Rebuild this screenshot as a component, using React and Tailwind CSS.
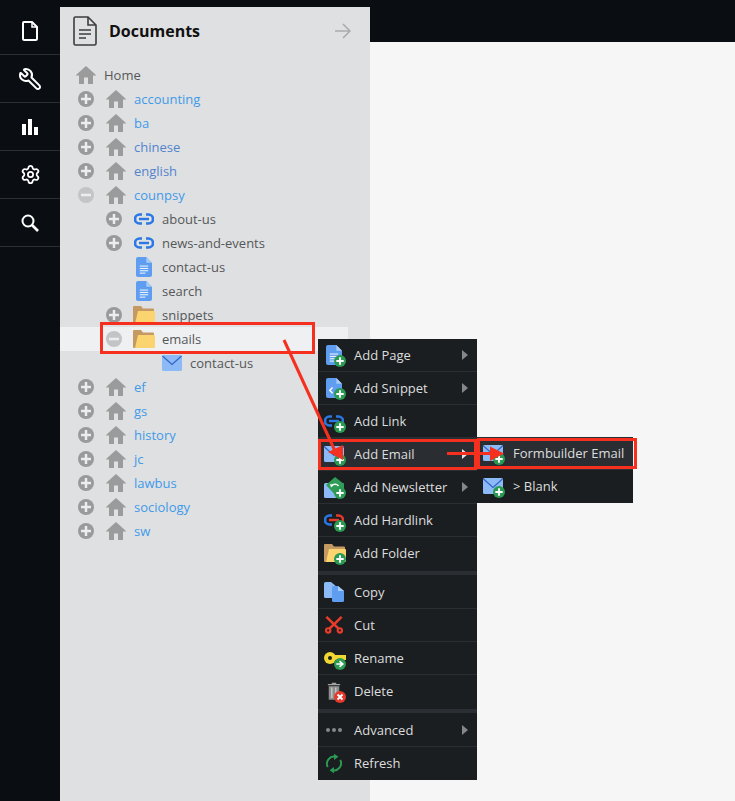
import { Settings, Wrench } from 'lucide-react';

const depthPad = { 0: 'pl-[18px]', 1: 'pl-[46px]', 2: 'pl-[74px]' };

function House() {
  return (
    <svg width="20" height="18" viewBox="0 0 20 18" className="shrink-0">
      <path d="M10 0 L20 9 V9.5 H17 V18 H12 V11.5 H8 V18 H3 V9.5 H0 V9 Z" fill="#9b9b9b" />
    </svg>
  );
}

function Toggle({ open }) {
  return (
    <svg width="16" height="16" viewBox="0 0 16 16" className="shrink-0">
      <circle cx="8" cy="8" r="8" fill={open ? '#c3c4c6' : '#999a9c'} />
      <rect x="3" y="6.75" width="10" height="2.5" fill="#eceded" />
      {!open && <rect x="6.75" y="3" width="2.5" height="10" fill="#eceded" />}
    </svg>
  );
}

function LinkIcon({ accent = '#2a78e4' }) {
  return (
    <svg width="20" height="12" viewBox="0 0 20 12" className="shrink-0">
      <path d="M8 1.5 H5.5 a4.5 4.5 0 0 0 0 9 H8" fill="none" stroke="#2a78e4" strokeWidth="2.6" />
      <path d="M12 1.5 H14.5 a4.5 4.5 0 0 1 0 9 H12" fill="none" stroke={accent} strokeWidth="2.6" />
      <rect x="5" y="4.8" width="10" height="2.4" fill={accent} />
    </svg>
  );
}

function PageIcon({ className = '' }) {
  return (
    <svg width="16" height="20" viewBox="0 0 17 21" className={`shrink-0 ${className}`}>
      <path d="M2 0 H11 L17 6 V19 a2 2 0 0 1 -2 2 H2 a2 2 0 0 1 -2 -2 V2 a2 2 0 0 1 2 -2 Z" fill="#5e9df0" />
      <path d="M11 0 L17 6 H11 Z" fill="#a9ccf8" />
      <path d="M4 9.5 H13 M4 12 H13 M4 14.5 H13 M4 17 H10" stroke="#fff" strokeWidth="1" />
    </svg>
  );
}

function SnippetIcon() {
  return (
    <svg width="16" height="20" viewBox="0 0 17 21" className="ml-[2px] shrink-0">
      <path d="M2 0 H11 L17 6 V19 a2 2 0 0 1 -2 2 H2 a2 2 0 0 1 -2 -2 V2 a2 2 0 0 1 2 -2 Z" fill="#5e9df0" />
      <path d="M11 0 L17 6 H11 Z" fill="#a9ccf8" />
      <path d="M7 10 L4 13 L7 16" fill="none" stroke="#fff" strokeWidth="1.5" />
    </svg>
  );
}

function FolderIcon() {
  return (
    <svg width="22" height="18" viewBox="0 0 22 18" className="shrink-0">
      <path d="M1 0 H8 L10 2.5 H20 a1 1 0 0 1 1 1 V17 a1 1 0 0 1 -1 1 H1 a1 1 0 0 1 -1 -1 V1 a1 1 0 0 1 1 -1 Z" fill="#c49a62" />
      <path d="M5 5 H21 a1 1 0 0 1 1 1 V17 a1 1 0 0 1 -1 1 H2 Z" fill="#fbd36f" />
    </svg>
  );
}

function EmailIcon() {
  return (
    <svg width="20" height="16" viewBox="0 0 20 16" className="shrink-0">
      <rect width="20" height="16" rx="1.5" fill="#8cbaf6" />
      <path d="M0.5 1 L10 9.5 L19.5 1" fill="none" stroke="#2e62c4" strokeWidth="1.1" />
    </svg>
  );
}

function NewsletterIcon() {
  return (
    <svg width="20" height="21" viewBox="0 0 20 21" className="shrink-0">
      <rect x="0" y="6" width="20" height="15" rx="1.5" fill="#8cbaf6" />
      <path d="M2 8 L11 0 L20 7 V15 L14 21 Z" fill="#2f9d57" />
      <path d="M7.5 9 a4 3.5 0 0 1 7 0" fill="none" stroke="#fff" strokeWidth="1.4" />
      <path d="M6 7 L9.5 8 L7 10.5 Z" fill="#fff" />
    </svg>
  );
}

function Badge({ color = '#2b9a52', type = 'plus' }) {
  return (
    <svg width="12" height="12" viewBox="0 0 13 13" className="absolute bottom-0 right-[2px]">
      <circle cx="6.5" cy="6.5" r="6.5" fill={color} />
      {type === 'plus' && <path d="M6.5 2.5 V10.5 M2.5 6.5 H10.5" stroke="#fff" strokeWidth="2" />}
      {type === 'go' && <path d="M2.5 6.5 H8 M6 3.5 L9.5 6.5 L6 9.5" fill="none" stroke="#fff" strokeWidth="1.8" />}
      {type === 'x' && <path d="M3.8 3.8 L9.2 9.2 M9.2 3.8 L3.8 9.2" stroke="#fff" strokeWidth="2" />}
    </svg>
  );
}

function MenuIcon({ children, badge = 'plus', color }) {
  return (
    <span className="relative flex h-6 w-6 shrink-0 items-center justify-start">
      {children}
      {badge && <Badge type={badge} color={color} />}
    </span>
  );
}

function CopyIcon() {
  return (
    <svg width="20" height="20" viewBox="0 0 20 20">
      <path d="M1.5 0 H7 L13 5 V16 H1.5 a1.5 1.5 0 0 1 -1.5 -1.5 V1.5 a1.5 1.5 0 0 1 1.5 -1.5 Z" fill="#8cbaf6" />
      <path d="M9.5 4 H14 L20 9 V18.5 a1.5 1.5 0 0 1 -1.5 1.5 H9.5 a1.5 1.5 0 0 1 -1.5 -1.5 V5.5 a1.5 1.5 0 0 1 1.5 -1.5 Z" fill="#5e9df0" />
      <path d="M14 4 L20 9 H14 Z" fill="#a9ccf8" />
    </svg>
  );
}

function CutIcon() {
  return (
    <svg width="18" height="18" viewBox="0 0 20 20" className="ml-px">
      <path d="M18.5 1 L5 14 M1.5 1 L15 14" stroke="#ea3c2b" strokeWidth="2.8" />
      <circle cx="3.5" cy="16" r="2.4" fill="none" stroke="#ea3c2b" strokeWidth="2.4" />
      <circle cx="16.5" cy="16" r="2.4" fill="none" stroke="#ea3c2b" strokeWidth="2.4" />
    </svg>
  );
}

function KeyIcon() {
  return (
    <svg width="22" height="12" viewBox="0 0 22 12">
      <rect x="8" y="3" width="14" height="5" fill="#f2d633" />
      <circle cx="6" cy="6" r="6" fill="#f2d633" />
      <circle cx="6" cy="6" r="2" fill="#1b1e21" />
    </svg>
  );
}

function TrashIcon() {
  return (
    <svg width="14" height="18" viewBox="0 0 16 20" className="ml-[3px]">
      <path d="M1 2 H5.5 V0.5 H10.5 V2 H15 V3.5 H1 Z" fill="#a3a3a3" />
      <path d="M2 4.5 H14 V20 H2 Z" fill="#8e8e8e" />
      <path d="M5.5 6 V18 M10 6 V18" stroke="#c9c9c9" strokeWidth="1.5" />
    </svg>
  );
}

function RefreshIcon() {
  return (
    <svg width="16" height="21" viewBox="0 0 18 22" className="ml-[2px]">
      <path d="M2 15 a8 8 0 0 1 9 -11.5 M16 7 a8 8 0 0 1 -9 11.5" fill="none" stroke="#2b9a52" strokeWidth="2.2" />
      <path d="M9 0 L14 3.5 L9 7 Z M9 15 L4 18.5 L9 22 Z" fill="#2b9a52" />
    </svg>
  );
}

function TreeRow({ depth = 0, toggle, icon, label, tone = 'text-[#555759]', active }) {
  return (
    <div className={`flex h-6 items-center ${depthPad[depth]} ${active ? 'mr-[22px] bg-[#eff0f2]' : ''}`}>
      {toggle ? <Toggle open={toggle === 'open'} /> : <span className="w-4 shrink-0" />}
      <span className="ml-3 flex w-5 shrink-0 justify-center">{icon}</span>
      <span className={`ml-2 pt-[2px] ${tone}`}>{label}</span>
    </div>
  );
}

function Site({ label, tone = 'text-[#3f9ae8]', open }) {
  return <TreeRow toggle={open ? 'open' : 'closed'} icon={<House />} label={label} tone={tone} />;
}

function MenuRow({ icon, label, arrow, active, last }) {
  return (
    <div className={`flex h-[33px] items-center border-b pl-[6px] pr-[9px] ${last ? 'border-transparent' : 'border-[#2b2e32]'} ${active ? 'bg-[#2a2d32]' : ''}`}>
      {icon}
      <span className="ml-1.5 flex-1 whitespace-nowrap pt-[2px] text-[#dcdddd]">{label}</span>
      {arrow && <span className={`h-0 w-0 border-y-[5px] border-l-[6px] border-y-transparent ${active ? 'border-l-[#e6e6e6]' : 'border-l-[#85878a]'}`} />}
    </div>
  );
}

export default function App() {
  return (
    <div className="relative flex h-screen w-screen overflow-hidden bg-[#0a0e13] text-[13px] [font-family:'Open_Sans',sans-serif]">
      <nav className="w-[60px] shrink-0 text-white">
        <div className="flex h-[55px] items-center justify-center border-b border-[#2b2e32] pt-2">
          <svg width="16" height="20" viewBox="0 0 16 20">
            <path d="M2 1 H10 L15 6 V17.5 a1.5 1.5 0 0 1 -1.5 1.5 H2.5 a1.5 1.5 0 0 1 -1.5 -1.5 V2 a1 1 0 0 1 1 -1 Z" fill="none" stroke="#fff" strokeWidth="2" />
            <path d="M10 1 V6 H15" fill="none" stroke="#fff" strokeWidth="1.5" />
          </svg>
        </div>
        <div className="flex h-12 items-center justify-center border-b border-[#2b2e32]">
          <Wrench size={24} strokeWidth={2} className="-scale-x-100" />
        </div>
        <div className="flex h-12 items-center justify-center border-b border-[#2b2e32]">
          <svg width="16" height="16" viewBox="0 0 16 16" fill="#fff">
            <rect y="5" width="4" height="11" />
            <rect x="6" width="4" height="16" />
            <rect x="12" y="8" width="4" height="8" />
          </svg>
        </div>
        <div className="flex h-12 items-center justify-center border-b border-[#2b2e32]">
          <Settings size={21} strokeWidth={2} />
        </div>
        <div className="flex h-12 items-center justify-center border-b border-[#2b2e32]">
          <svg width="18" height="18" viewBox="0 0 18 18">
            <circle cx="7" cy="7" r="5.5" fill="none" stroke="#fff" strokeWidth="2" />
            <path d="M11 11 L17 17" stroke="#fff" strokeWidth="2.6" />
          </svg>
        </div>
      </nav>

      <aside className="mt-[7px] w-[310px] shrink-0 bg-[#dfe0e2]">
        <header className="flex h-12 items-center pl-[13px] pr-[19px]">
          <svg width="24" height="30" viewBox="0 0 24 30" className="shrink-0">
            <path d="M2.5 1 H15 L23 9 V27.5 a1.5 1.5 0 0 1 -1.5 1.5 H2.5 A1.5 1.5 0 0 1 1 27.5 V2.5 A1.5 1.5 0 0 1 2.5 1 Z" fill="none" stroke="#3b3d40" strokeWidth="1.6" />
            <path d="M15 1 V9 H23" fill="none" stroke="#3b3d40" strokeWidth="1.6" />
            <path d="M6 14 H18 M6 18 H18 M6 22 H13" stroke="#3b3d40" strokeWidth="1.6" />
          </svg>
          <h1 className="ml-3 flex-1 text-base font-bold text-[#111]">Documents</h1>
          <svg width="16" height="16" viewBox="0 0 16 16">
            <path d="M0 8 H15 M8 1 L15 8 L8 15" fill="none" stroke="#a9aaac" strokeWidth="1.5" />
          </svg>
        </header>

        <div className="mt-2">
          <div className="flex h-6 items-center pl-4">
            <House />
            <span className="ml-2 pt-[2px] text-[#555759]">Home</span>
          </div>
          <Site label="accounting" />
          <Site label="ba" />
          <Site label="chinese" tone="text-[#5384cc]" />
          <Site label="english" tone="text-[#5384cc]" />
          <Site label="counpsy" open />
          <TreeRow depth={1} toggle="closed" icon={<LinkIcon />} label="about-us" />
          <TreeRow depth={1} toggle="closed" icon={<LinkIcon />} label="news-and-events" />
          <TreeRow depth={1} icon={<PageIcon />} label="contact-us" />
          <TreeRow depth={1} icon={<PageIcon />} label="search" />
          <TreeRow depth={1} toggle="closed" icon={<FolderIcon />} label="snippets" />
          <TreeRow depth={1} toggle="open" icon={<FolderIcon />} label="emails" active />
          <TreeRow depth={2} icon={<EmailIcon />} label="contact-us" />
          <Site label="ef" />
          <Site label="gs" />
          <Site label="history" />
          <Site label="jc" />
          <Site label="lawbus" />
          <Site label="sociology" />
          <Site label="sw" />
        </div>
      </aside>

      <main className="flex-1 pt-[42px]">
        <div className="h-full bg-[#f6f6f6]" />
      </main>

      {/* context menu */}
      <div className="absolute left-[318px] top-[339px] w-[159px] bg-[#1b1e21]">
        <MenuRow icon={<MenuIcon><PageIcon className="ml-[2px]" /></MenuIcon>} label="Add Page" arrow />
        <MenuRow icon={<MenuIcon><SnippetIcon /></MenuIcon>} label="Add Snippet" arrow />
        <MenuRow icon={<MenuIcon><LinkIcon /></MenuIcon>} label="Add Link" />
        <MenuRow icon={<MenuIcon><EmailIcon /></MenuIcon>} label="Add Email" arrow active />
        <MenuRow icon={<MenuIcon><NewsletterIcon /></MenuIcon>} label="Add Newsletter" arrow />
        <MenuRow icon={<MenuIcon><LinkIcon accent="#e5392b" /></MenuIcon>} label="Add Hardlink" />
        <MenuRow icon={<MenuIcon><FolderIcon /></MenuIcon>} label="Add Folder" last />
        <div className="h-[6px] border-y-[1.5px] border-y-[#1b1e21] bg-[#2b2e32]" />
        <MenuRow icon={<MenuIcon badge={null}><CopyIcon /></MenuIcon>} label="Copy" />
        <MenuRow icon={<MenuIcon badge={null}><CutIcon /></MenuIcon>} label="Cut" />
        <MenuRow icon={<MenuIcon badge="go"><KeyIcon /></MenuIcon>} label="Rename" />
        <MenuRow icon={<MenuIcon badge="x" color="#e5392b"><TrashIcon /></MenuIcon>} label="Delete" last />
        <div className="h-[6px] border-y-[1.5px] border-y-[#1b1e21] bg-[#2b2e32]" />
        <MenuRow icon={<span className="flex w-6 gap-[2px] pl-[2px]"><i className="h-1 w-1 rounded-full bg-[#85878a]" /><i className="h-1 w-1 rounded-full bg-[#85878a]" /><i className="h-1 w-1 rounded-full bg-[#85878a]" /></span>} label="Advanced" arrow />
        <MenuRow icon={<MenuIcon badge={null}><RefreshIcon /></MenuIcon>} label="Refresh" last />
      </div>

      {/* submenu */}
      <div className="absolute left-[477px] top-[437px] w-[156px] bg-[#1b1e21]">
        <MenuRow icon={<MenuIcon><EmailIcon /></MenuIcon>} label="Formbuilder Email" active />
        <MenuRow icon={<MenuIcon><EmailIcon /></MenuIcon>} label="> Blank" last />
      </div>

      {/* red annotations */}
      <div className="absolute left-[100px] top-[322px] h-[32px] w-[215px] border-[3px] border-[#f5301f]" />
      <div className="absolute left-[318px] top-[439px] h-[31px] w-[159px] border-[3px] border-[#f5301f]" />
      <div className="absolute left-[477px] top-[438px] h-[31px] w-[160px] border-[3px] border-[#f5301f]" />
      <svg width="735" height="801" viewBox="0 0 735 801" className="pointer-events-none absolute left-0 top-0">
        <path d="M284 340 L335 451" stroke="#f5301f" strokeWidth="3" />
        <path d="M343 460 L328 452 L343 445 Z" fill="#f5301f" />
        <path d="M447 453.5 H492" stroke="#f5301f" strokeWidth="3" />
        <path d="M504 453.5 L490 446.5 V461 Z" fill="#f5301f" />
      </svg>
    </div>
  );
}
